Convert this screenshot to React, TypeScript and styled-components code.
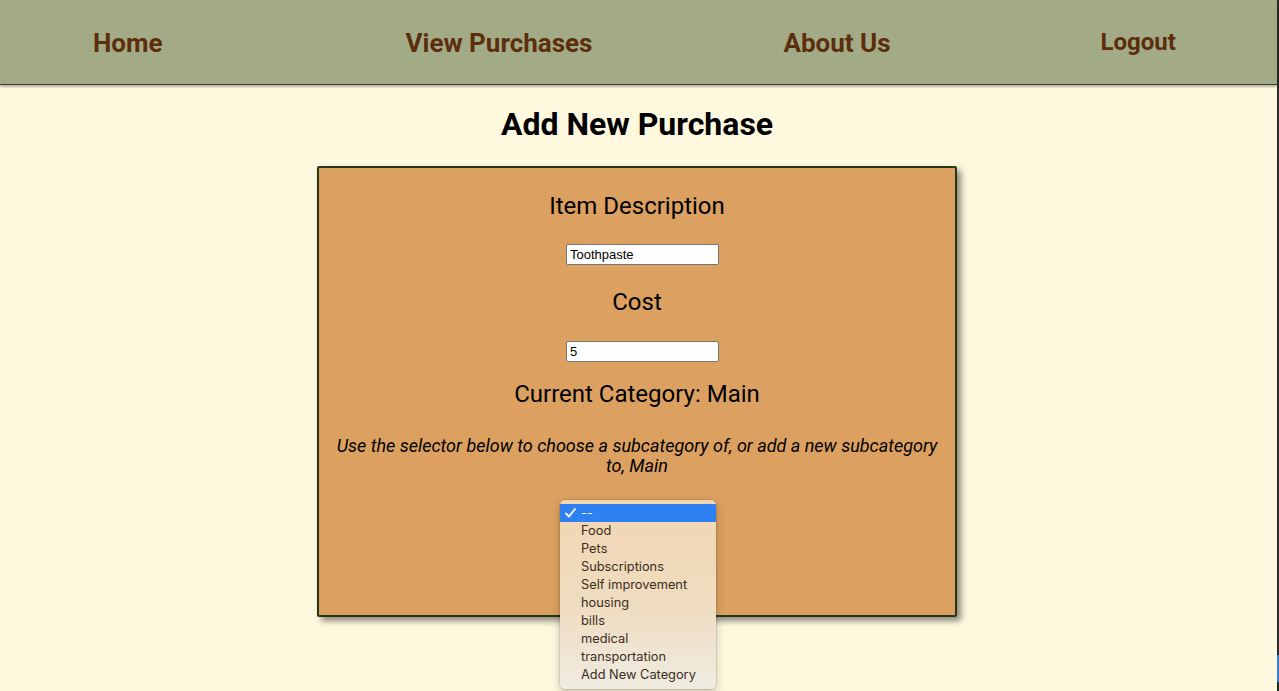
import React from "react";
import styled, { createGlobalStyle } from "styled-components";

const GlobalStyle = createGlobalStyle`
  html, body { margin: 0; padding: 0; height: 100%; }
  body { background: #fef8df; font-family: Roboto, "Liberation Sans", sans-serif; overflow: hidden; }
  * { box-sizing: border-box; }
`;

const Screen = styled.div`
  display: flex;
  width: 1279px;
  height: 691px;
`;

const Page = styled.div`
  flex: 1;
  min-width: 0;
  background: #fef8df;
  display: flex;
  flex-direction: column;
`;

const EdgeStrip = styled.div`
  width: 2px;
  background: linear-gradient(
    to bottom,
    #2b2b2b 0,
    #2b2b2b 655px,
    #2f7fd8 655px,
    #2f7fd8 682px,
    #1d2a22 682px
  );
`;

const NavBar = styled.nav`
  height: 85px;
  background: #a3ab86;
  border-bottom: 1px solid #33402a;
  box-shadow: 0 2px 2px rgba(0, 0, 0, 0.28);
  display: flex;
  align-items: center;
  position: relative;
  z-index: 1;
`;

const NavLink = styled.a<{ $offset: number; $small?: boolean }>`
  margin-left: ${(p) => p.$offset}px;
  margin-top: ${(p) => (p.$small ? 0 : 2)}px;
  font-family: Roboto, "Liberation Sans", sans-serif;
  font-weight: 700;
  font-size: ${(p) => (p.$small ? 24 : 26)}px;
  color: #5c2e0e;
  text-decoration: none;
  white-space: nowrap;
  cursor: pointer;
`;

const Content = styled.main`
  display: flex;
  flex-direction: column;
  align-items: center;
  padding-right: 3px;
`;

const Title = styled.h1`
  margin: 20px 0 0;
  font-family: Roboto, "Liberation Sans", sans-serif;
  font-weight: 700;
  font-size: 32px;
  line-height: 38px;
  color: #000;
`;

const Card = styled.form`
  margin-top: 23px;
  width: 640px;
  height: 451px;
  background: #dca060;
  border: 2px solid #263619;
  border-radius: 2px;
  box-shadow: 4px 4px 6px rgba(0, 0, 0, 0.45);
  padding: 0 16px;
  display: flex;
  flex-direction: column;
  align-items: center;
`;

const FieldLabel = styled.label<{ $gap: number }>`
  margin-top: ${(p) => p.$gap}px;
  font-family: Roboto, "Liberation Sans", sans-serif;
  font-size: 24px;
  line-height: 28px;
  color: #000;
`;

const TextInput = styled.input<{ $gap: number }>`
  margin-top: ${(p) => p.$gap}px;
  margin-left: 11px;
  width: 153px;
  height: 21px;
  padding: 1px 3px;
  border: 1px solid #767676;
  border-radius: 2px;
  background: #fff;
  font-family: "Liberation Sans", Arial, sans-serif;
  font-size: 13px;
  color: #000;
  outline: none;
`;

const Hint = styled.p`
  margin: 28px 0 0;
  font-family: Roboto, "Liberation Sans", sans-serif;
  font-style: italic;
  font-size: 18px;
  line-height: 20px;
  text-align: center;
  color: #000;
`;

const SelectWrap = styled.div`
  margin-top: 26px;
  margin-left: 2px;
  position: relative;
  width: 156px;
  height: 18px;
`;

const Menu = styled.ul`
  position: absolute;
  left: 0;
  top: -2px;
  width: 156px;
  margin: 0;
  padding: 4px 0 5px;
  list-style: none;
  border-radius: 5px;
  background: linear-gradient(to bottom, #f1d6b3 0%, #efdcc0 55%, #efece1 100%);
  box-shadow: 0 0 0 0.5px rgba(0, 0, 0, 0.18), 0 4px 10px rgba(0, 0, 0, 0.22);
  z-index: 5;
`;

const MenuItem = styled.li<{ $active?: boolean }>`
  position: relative;
  height: 18px;
  line-height: 17px;
  padding-left: 21px;
  font-family: Inter, "Liberation Sans", sans-serif;
  font-size: 12.8px;
  color: ${(p) => (p.$active ? "#fff" : "#3b2c1c")};
  background: ${(p) => (p.$active ? "#2f80f0" : "transparent")};
  white-space: nowrap;
`;

const Check = styled.svg`
  position: absolute;
  left: 5px;
  top: 4px;
`;

const options = [
  "--",
  "Food",
  "Pets",
  "Subscriptions",
  "Self improvement",
  "housing",
  "bills",
  "medical",
  "transportation",
  "Add New Category",
];

export default function App() {
  return (
    <>
      <GlobalStyle />
      <Screen>
        <Page>
          <NavBar>
            <NavLink $offset={93}>Home</NavLink>
            <NavLink $offset={243}>View Purchases</NavLink>
            <NavLink $offset={191}>About Us</NavLink>
            <NavLink $offset={210} $small>Logout</NavLink>
          </NavBar>
          <Content>
            <Title>Add New Purchase</Title>
            <Card onSubmit={(e) => e.preventDefault()}>
              <FieldLabel $gap={24}>Item Description</FieldLabel>
              <TextInput $gap={24} defaultValue="Toothpaste" />
              <FieldLabel $gap={23}>Cost</FieldLabel>
              <TextInput $gap={25} defaultValue="5" />
              <FieldLabel $gap={18}>Current Category: Main</FieldLabel>
              <Hint>
                Use the selector below to choose a subcategory of, or add a new subcategory to, Main
              </Hint>
              <SelectWrap>
                <Menu>
                  {options.map((o, i) => (
                    <MenuItem key={o} $active={i === 0}>
                      {i === 0 && (
                        <Check width="11" height="10" viewBox="0 0 11 10">
                          <path d="M1 5.5 L4 8.5 L10 1" fill="none" stroke="#fff" strokeWidth="1.8" strokeLinecap="round" strokeLinejoin="round" />
                        </Check>
                      )}
                      {o}
                    </MenuItem>
                  ))}
                </Menu>
              </SelectWrap>
            </Card>
          </Content>
        </Page>
        <EdgeStrip />
      </Screen>
    </>
  );
}
